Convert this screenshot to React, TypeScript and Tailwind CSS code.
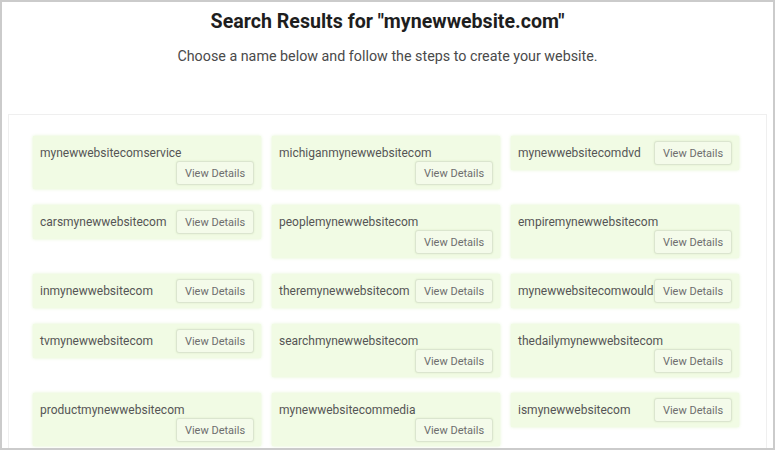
import React from "react";

type Item = { name: string; wrap: boolean };

const items: Item[] = [
  { name: "mynewwebsitecomservice", wrap: true },
  { name: "michiganmynewwebsitecom", wrap: true },
  { name: "mynewwebsitecomdvd", wrap: false },
  { name: "carsmynewwebsitecom", wrap: false },
  { name: "peoplemynewwebsitecom", wrap: true },
  { name: "empiremynewwebsitecom", wrap: true },
  { name: "inmynewwebsitecom", wrap: false },
  { name: "theremynewwebsitecom", wrap: false },
  { name: "mynewwebsitecomwould", wrap: false },
  { name: "tvmynewwebsitecom", wrap: false },
  { name: "searchmynewwebsitecom", wrap: true },
  { name: "thedailymynewwebsitecom", wrap: true },
  { name: "productmynewwebsitecom", wrap: true },
  { name: "mynewwebsitecommedia", wrap: true },
  { name: "ismynewwebsitecom", wrap: false },
];

function Button() {
  return (
    <button className="w-[78px] h-[24px] shrink-0 rounded-[3px] border border-[#dbe5cf] bg-[#f4fbea] text-[11px] leading-none text-[#6e6e6e] shadow-[0_0_2px_rgba(190,215,160,0.4)]">
      View Details
    </button>
  );
}

function Card({ item }: { item: Item }) {
  if (item.wrap) {
    return (
      <div className="w-[228px] bg-[#f1fbe4] px-[7px] pb-[4px] shadow-[0_0_3px_rgba(220,242,195,0.8)]">
        <div className="h-[25px] pt-[9px] text-[12px] leading-[16px] text-[#555]">{item.name}</div>
        <div className="flex justify-end">
          <Button />
        </div>
      </div>
    );
  }
  return (
    <div className="w-[228px] h-[34px] bg-[#f1fbe4] px-[7px] flex items-center justify-between shadow-[0_0_3px_rgba(220,242,195,0.8)]">
      <div className="text-[12px] leading-[16px] text-[#555]">{item.name}</div>
      <Button />
    </div>
  );
}

export default function App() {
  return (
    <div
      className="w-[775px] h-[450px] bg-white border-2 border-[#cbcbcb] overflow-hidden"
      style={{ fontFamily: "Roboto, 'Noto Sans', sans-serif" }}
    >
      <div className="flex flex-col items-center">
        <h1 className="mt-[7px] text-[19.6px] leading-[26px] font-bold text-[#1e1e1e]">
          Search Results for "mynewwebsite.com"
        </h1>
        <p className="mt-[12px] text-[14.3px] leading-[18px] text-[#4a4a4a]">
          Choose a name below and follow the steps to create your website.
        </p>
      </div>
      <div className="mt-[49px] mx-[6px] border border-[#efefef] h-[400px] pl-[24px] pt-[21px]">
        <div className="grid grid-cols-[228px_228px_228px] gap-x-[11px] gap-y-[16px] items-start">
          {items.map((it) => (
            <Card key={it.name} item={it} />
          ))}
        </div>
      </div>
    </div>
  );
}
